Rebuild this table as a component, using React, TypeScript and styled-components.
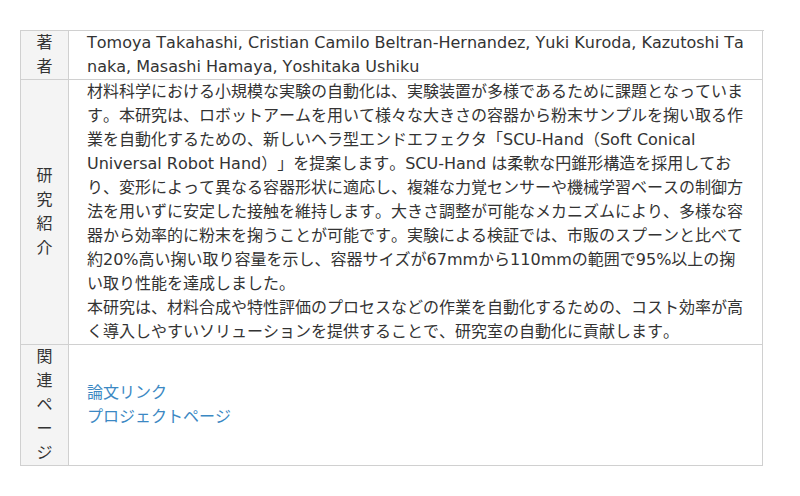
import React from "react";
import styled, { createGlobalStyle } from "styled-components";

const GlobalStyle = createGlobalStyle`
  html, body {
    margin: 0;
    padding: 0;
    background: #ffffff;
  }
  body {
    font-family: "DejaVu Sans", "Noto Sans CJK JP", sans-serif;
    font-size: 16px;
    line-height: 24px;
    color: #333333;
    font-kerning: none;
    text-spacing-trim: space-all;
  }
`;

const Page = styled.div`
  padding: 30px 0 0 20px;
`;

const InfoTable = styled.div`
  display: grid;
  grid-template-columns: 48px 694px;
  width: 743px;
  border-top: 1px solid #d0d0d0;
  border-left: 1px solid #d0d0d0;
`;

const HeadCell = styled.div`
  background: #f4f4f4;
  border-right: 1px solid #d0d0d0;
  border-bottom: 1px solid #d0d0d0;
  padding: 0 8px;
  display: flex;
  align-items: center;
  justify-content: center;
  text-align: center;
  word-break: break-all;
`;

const DataCell = styled.div<{ $breakAll?: boolean; $middle?: boolean }>`
  border-right: 1px solid #d0d0d0;
  border-bottom: 1px solid #d0d0d0;
  padding: 0 14px 0 18px;
  display: flex;
  flex-direction: column;
  justify-content: ${(p) => (p.$middle ? "center" : "flex-start")};
  word-break: ${(p) => (p.$breakAll ? "break-all" : "normal")};
`;

const Paragraph = styled.p`
  margin: 0;
`;

const LinkItem = styled.a`
  color: #3b88c3;
  text-decoration: none;
  display: block;
`;

export default function App() {
  return (
    <>
      <GlobalStyle />
      <Page>
        <InfoTable>
          <HeadCell>著者</HeadCell>
          <DataCell $breakAll>
            Tomoya Takahashi, Cristian Camilo Beltran-Hernandez, Yuki Kuroda, Kazutoshi Tanaka, Masashi Hamaya, Yoshitaka Ushiku
          </DataCell>

          <HeadCell>研究紹介</HeadCell>
          <DataCell>
            <Paragraph>
              材料科学における小規模な実験の自動化は、実験装置が多様であるために課題となっています。本研究は、ロボットアームを用いて様々な大きさの容器から粉末サンプルを掬い取る作業を自動化するための、新しいヘラ型エンドエフェクタ「SCU-Hand（Soft Conical Universal Robot Hand）」を提案します。SCU-Hand は柔軟な円錐形構造を採用しており、変形によって異なる容器形状に適応し、複雑な力覚センサーや機械学習ベースの制御方法を用いずに安定した接触を維持します。大きさ調整が可能なメカニズムにより、多様な容器から効率的に粉末を掬うことが可能です。実験による検証では、市販のスプーンと比べて約20%高い掬い取り容量を示し、容器サイズが67mmから110mmの範囲で95%以上の掬い取り性能を達成しました。
            </Paragraph>
            <Paragraph>
              本研究は、材料合成や特性評価のプロセスなどの作業を自動化するための、コスト効率が高く導入しやすいソリューションを提供することで、研究室の自動化に貢献します。
            </Paragraph>
          </DataCell>

          <HeadCell>関連ページ</HeadCell>
          <DataCell $middle>
            <LinkItem href="#">論文リンク</LinkItem>
            <LinkItem href="#">プロジェクトページ</LinkItem>
          </DataCell>
        </InfoTable>
      </Page>
    </>
  );
}
